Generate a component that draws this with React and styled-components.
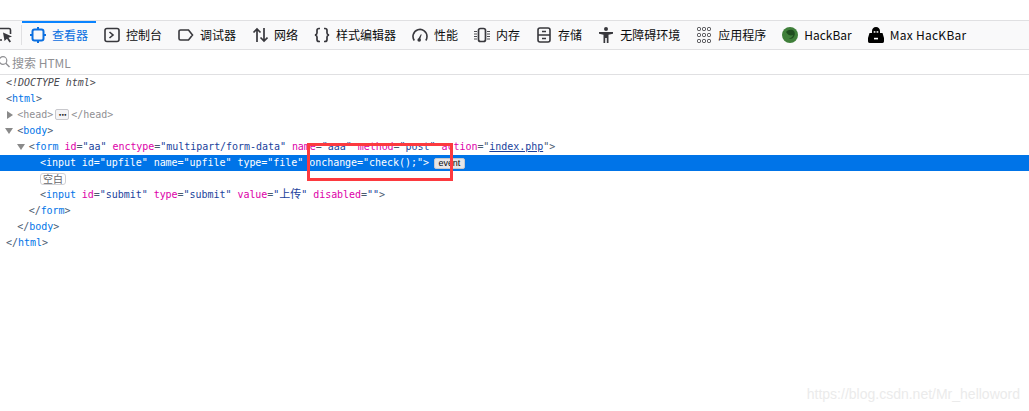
import React from "react";
import styled, { createGlobalStyle, css } from "styled-components";

const Global = createGlobalStyle`
  html, body { margin: 0; padding: 0; background: #fff; overflow: hidden; }
  #root { height: 411px; }
`;

const tabs = [
  { key: "inspector", label: "查看器", active: true },
  { key: "console", label: "控制台" },
  { key: "debugger", label: "调试器" },
  { key: "network", label: "网络" },
  { key: "style", label: "样式编辑器" },
  { key: "perf", label: "性能" },
  { key: "memory", label: "内存" },
  { key: "storage", label: "存储" },
  { key: "a11y", label: "无障碍环境" },
  { key: "apps", label: "应用程序" },
  { key: "hackbar", label: "HackBar" },
  { key: "maxhack", label: "Max HacKBar", track: 0.27 },
];

const icons = {
  inspector: (
    <g fill="none" stroke="#0a6fe0" strokeWidth="2">
      <rect x="2.500" y="2.500" width="11" height="11" rx="2" />
      <path d="M8 0v2.500M8 13.500V16M0 8h2.500M13.500 8H16" />
    </g>
  ),
  console: (
    <g fill="none" stroke="#38383d" strokeWidth="1.600">
      <rect x="1" y="1.500" width="14" height="13" rx="2" />
      <path d="M5.500 5l3.500 3-3.500 3" />
    </g>
  ),
  debugger: <path d="M2.500 3h8l4 5-4 5h-8a1.500 1.500 0 0 1-1.500-1.500v-7A1.500 1.500 0 0 1 2.500 3z" fill="none" stroke="#38383d" strokeWidth="1.600" />,
  network: <path d="M5 15V2M1.500 5.500L5 2l3.500 3.500M12 1v13M8.500 10.500L12 14l3.500-3.500" fill="none" stroke="#38383d" strokeWidth="1.700" />,
  style: <path d="M6 1.500H5c-1.500 0-2 .7-2 2v2.500c0 1-.5 1.700-2 2 1.500.3 2 1 2 2v2.500c0 1.300.5 2 2 2h1M10 1.500h1c1.500 0 2 .7 2 2v2.500c0 1 .5 1.700 2 2-1.500.3-2 1-2 2v2.500c0 1.300-.5 2-2 2h-1" fill="none" stroke="#38383d" strokeWidth="1.700" />,
  perf: (
    <g fill="#38383d">
      <path d="M2.300 13.500A7 7 0 1 1 15 9.500c0 1.500-.4 2.900-1.200 4" fill="none" stroke="#38383d" strokeWidth="1.600" />
      <path d="M6.300 11.700l2.600-4.500.8.4-1.600 5z" />
      <circle cx="7.200" cy="13" r="1.800" />
    </g>
  ),
  memory: (
    <g fill="none" stroke="#38383d">
      <rect x="4.500" y="1.500" width="7" height="13" rx="2" strokeWidth="1.700" />
      <path d="M0 4.500h3M0 7h3M0 9.500h3M0 12h3M13 4.500h3M13 7h3M13 9.500h3M13 12h3" strokeWidth=".9" />
    </g>
  ),
  storage: (
    <g fill="none" stroke="#38383d" strokeWidth="1.600">
      <rect x="2" y="1" width="12" height="14" rx="2" />
      <path d="M2 8h12M6 4.500h4M6 11.500h4" />
    </g>
  ),
  a11y: <path d="M8 0a2 2 0 1 1 0 4 2 2 0 0 1 0-4zM1 5h14v1.800l-4.500 1V16H8.800v-5H7.200v5H5.500V7.800L1 6.800z" fill="#38383d" />,
  apps: (
    <g fill="none" stroke="#38383d" strokeWidth="1">
      {[2, 8, 14].map((y) => [3, 8, 13].map((x) => <rect key={`${x}-${y}`} x={x - 1.5} y={y - 1.5} width="3" height="3" rx="1" />))}
    </g>
  ),
  hackbar: (
    <g>
      <circle cx="8" cy="8" r="8" fill="#3f7f3a" />
      <path d="M4 5c2-2.500 6-3 8-1 1.500 2 1 5-1 7-1 1-3 1-4 .2 2 0 4-1.200 4-3.200C9 9 6 8.500 4 5z" fill="#1f4d20" />
    </g>
  ),
  maxhack: (
    <g>
      <path d="M8 0c2.500 0 4 1.800 4 4v2h2.500l1.500 5v3c0 1-.5 2-1.500 2h-13C.5 16 0 15 0 14v-3l1.500-5H4V4c0-2.200 1.500-4 4-4z" fill="#000" />
      <rect x="5.700" y="4.200" width="1.700" height="1.500" fill="#fff" />
      <rect x="8.600" y="4.200" width="1.700" height="1.500" fill="#fff" />
      <rect x="6" y="10.800" width="4" height="1.600" fill="#fff" />
    </g>
  ),
};

export default function App() {
  return (
    <Page>
      <Global />
      <TopGap />
      <Toolbar>
        <PickBox>
          <svg width="16" height="16" viewBox="0 0 16 16">
            <path d="M1 1.500h11a1.500 1.500 0 0 1 1.500 1.500v4M5 13H2.500" fill="none" stroke="#38383d" strokeWidth="1.600" />
            <path d="M6 5.500l9 4-3.500 1.300 2.500 3.700-1.500 1-2.500-3.700L7.500 14z" fill="#38383d" />
          </svg>
        </PickBox>
        <Divider />
        {tabs.map((t) => (
          <Tab key={t.key} $active={t.active}>
            <svg width="16" height="16" viewBox="0 0 16 16">{icons[t.key]}</svg>
            <TabLabel $track={t.track}>{t.label}</TabLabel>
          </Tab>
        ))}
      </Toolbar>
      <SearchBar>
        <svg width="12" height="12" viewBox="0 0 12 12">
          <circle cx="3" cy="4.500" r="3.800" fill="none" stroke="#8f8f93" strokeWidth="1.200" />
          <path d="M5.800 7.300L9.500 11" stroke="#8f8f93" strokeWidth="1.400" />
        </svg>
        <SearchText>搜索 HTML</SearchText>
      </SearchBar>
      <Tree>
        <Row $depth={0}><Doctype>&lt;!DOCTYPE html&gt;</Doctype></Row>
        <Row $depth={0}><P>&lt;</P><Tag>html</Tag><P>&gt;</P></Row>
        <Row $depth={1} $muted>
          <Twisty $closed $depth={1} />
          <P>&lt;</P><Tag>head</Tag><P>&gt;</P>
          <Dots>•••</Dots>
          <P>&lt;/</P><Tag>head</Tag><P>&gt;</P>
        </Row>
        <Row $depth={1}>
          <Twisty $depth={1} />
          <P>&lt;</P><Tag>body</Tag><P>&gt;</P>
        </Row>
        <Row $depth={2}>
          <Twisty $depth={2} />
          <P>&lt;</P><Tag>form</Tag> <Attr name="id" value="aa" /> <Attr name="enctype" value="multipart/form-data" /> <Attr name="name" value="aaa" /> <Attr name="method" value="post" /> <AttrName>action</AttrName><P>=</P><P>"</P><Link>index.php</Link><P>"&gt;</P>
        </Row>
        <Row $depth={3} $selected>
          <P>&lt;</P><Tag>input</Tag> <Attr name="id" value="upfile" /> <Attr name="name" value="upfile" /> <Attr name="type" value="file" /> <Attr name="onchange" value="check();" /><P>&gt;</P>
          <EventBadge>event</EventBadge>
        </Row>
        <Row $depth={3}><Blank>空白</Blank></Row>
        <Row $depth={3}>
          <P>&lt;</P><Tag>input</Tag> <Attr name="id" value="submit" /> <Attr name="type" value="submit" /> <AttrName>value</AttrName><P>=</P><AttrValue>"<Cjk>上传</Cjk>"</AttrValue> <Attr name="disabled" value="" /><P>&gt;</P>
        </Row>
        <Row $depth={2}><P>&lt;/</P><Tag>form</Tag><P>&gt;</P></Row>
        <Row $depth={1}><P>&lt;/</P><Tag>body</Tag><P>&gt;</P></Row>
        <Row $depth={0}><P>&lt;/</P><Tag>html</Tag><P>&gt;</P></Row>
        <RedBox />
      </Tree>
      <Watermark>https://blog.csdn.net/Mr_helloword</Watermark>
    </Page>
  );
}

const Attr = ({ name, value }) => (
  <>
    <AttrName>{name}</AttrName>
    <P>=</P>
    <AttrValue>"{value}"</AttrValue>
  </>
);

const Page = styled.div`
  position: relative;
  width: 1029px;
  height: 411px;
  overflow: hidden;
  background: #fff;
`;
const TopGap = styled.div`
  height: 20px;
`;
const Toolbar = styled.div`
  display: flex;
  align-items: stretch;
  height: 28px;
  background: #f9f9fa;
  border-top: 1px solid #e0e0e2;
  border-bottom: 1px solid #e0e0e2;
`;
const PickBox = styled.div`
  display: flex;
  align-items: center;
  width: 24px;
  margin-left: -3px;
  flex: none;
`;
const Divider = styled.div`
  width: 1px;
  margin: 4px 0;
  background: #e0e0e2;
  flex: none;
`;
const Tab = styled.div`
  display: flex;
  align-items: center;
  gap: 6px;
  padding: 0 8px;
  font: 12px "Noto Sans CJK SC", "Noto Sans", sans-serif;
  color: #0c0c0d;
  white-space: nowrap;
  flex: none;
  ${(p) =>
    p.$active &&
    css`
      color: #0a6fe0;
      box-shadow: inset 0 2px 0 #0a84ff;
    `}
`;
const TabLabel = styled.span`
  padding-bottom: 2px;
  letter-spacing: ${(p) => p.$track || 0}px;
`;
const SearchBar = styled.div`
  display: flex;
  align-items: center;
  height: 24px;
  border-bottom: 1px solid #e0e0e2;
`;
const SearchText = styled.span`
  font: 12px "Noto Sans CJK SC", "Noto Sans", sans-serif;
  color: #8f8f93;
`;
const Tree = styled.div`
  position: relative;
  font: 10px/16px "DejaVu Sans Mono", "Noto Sans CJK SC", monospace;
  letter-spacing: -0.04px;
  color: #737373;
`;
const P = styled.span`
  color: #4a5a70;
`;
const Tag = styled.span`
  color: #0074e8;
`;
const AttrName = styled.span`
  color: #dd00a9;
`;
const AttrValue = styled.span`
  color: #1a3f9c;
`;
const Cjk = styled.span`
  font-size: 11px;
  line-height: 10px;
`;
const Link = styled.span`
  color: #1a3f9c;
  text-decoration: underline;
`;
const Doctype = styled.span`
  color: #4a4a4f;
  font-style: italic;
`;
const Row = styled.div`
  position: relative;
  height: 16px;
  white-space: pre;
  padding-left: ${(p) => 6 + p.$depth * 11.33}px;
  ${(p) =>
    p.$muted &&
    css`
      ${P}, ${Tag} {
        color: #8f8f93;
      }
    `}
  ${(p) =>
    p.$selected &&
    css`
      background: #0074e8;
      color: #fff;
      ${P}, ${Tag}, ${AttrName}, ${AttrValue} {
        color: #fff;
      }
    `}
`;
const Twisty = styled.i`
  position: absolute;
  top: 5px;
  left: ${(p) => p.$depth * 11.33 - 6}px;
  width: 0;
  height: 0;
  ${(p) =>
    p.$closed
      ? css`
          border-left: 6px solid #8a8a8a;
          border-top: 4px solid transparent;
          border-bottom: 4px solid transparent;
          margin-left: 2px;
          top: 4px;
        `
      : css`
          border-top: 6px solid #8a8a8a;
          border-left: 4px solid transparent;
          border-right: 4px solid transparent;
        `}
`;
const Pill = styled.span`
  display: inline-block;
  box-sizing: border-box;
  height: 11px;
  line-height: 9px;
  border: 1px solid #c8c8cc;
  border-radius: 2px;
  background: #f4f4f6;
  vertical-align: 1px;
`;
const Dots = styled(Pill)`
  width: 14px;
  margin: 0 2px;
  font-size: 6px;
  text-align: center;
  color: #0c0c0d;
  letter-spacing: -1px;
`;
const EventBadge = styled(Pill)`
  width: 31px;
  margin-left: 5px;
  font-family: "Liberation Sans", sans-serif;
  font-size: 9px;
  text-align: center;
  color: #0c0c0d;
  background: #e6e6e8;
  vertical-align: 0;
`;
const Blank = styled(Pill)`
  width: 26px;
  height: 12px;
  line-height: 10px;
  text-align: center;
  color: #66666b;
  font-family: "Noto Sans CJK SC", sans-serif;
  background: #fff;
  border-color: #d0d0d4;
  border-radius: 3px;
  vertical-align: -1px;
`;
const RedBox = styled.div`
  position: absolute;
  left: 307px;
  top: 68px;
  width: 146px;
  height: 38px;
  box-sizing: border-box;
  border: 3px solid #fc3a3f;
`;
const Watermark = styled.div`
  position: absolute;
  right: 9px;
  bottom: 9px;
  font: 14px "Liberation Sans", sans-serif;
  color: #ebebeb;
`;
